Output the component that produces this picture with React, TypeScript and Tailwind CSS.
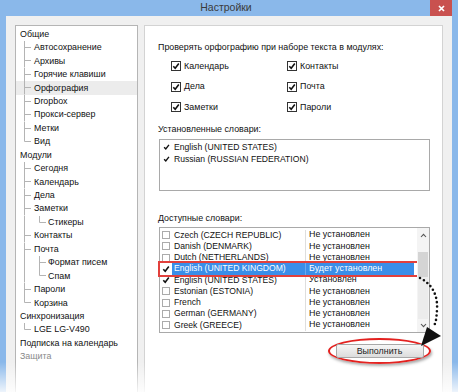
import React from "react";

type TreeNode = { label: string; children?: TreeNode[]; muted?: boolean };

const tree: TreeNode[] = [
  {
    label: "Общие",
    children: [
      { label: "Автосохранение" },
      { label: "Архивы" },
      { label: "Горячие клавиши" },
      { label: "Орфография" },
      { label: "Dropbox" },
      { label: "Прокси-сервер" },
      { label: "Метки" },
      { label: "Вид" },
    ],
  },
  {
    label: "Модули",
    children: [
      { label: "Сегодня" },
      { label: "Календарь" },
      { label: "Дела" },
      { label: "Заметки", children: [{ label: "Стикеры" }] },
      { label: "Контакты" },
      { label: "Почта", children: [{ label: "Формат писем" }, { label: "Спам" }] },
      { label: "Пароли" },
      { label: "Корзина" },
    ],
  },
  { label: "Синхронизация", children: [{ label: "LGE LG-V490" }] },
  { label: "Подписка на календарь" },
  { label: "Защита", muted: true },
];

type FlatRow = { label: string; level: number; last: boolean; guides: boolean[]; muted?: boolean };

function flatten(nodes: TreeNode[], level = 0, guides: boolean[] = []): FlatRow[] {
  const out: FlatRow[] = [];
  nodes.forEach((n, i) => {
    const last = i === nodes.length - 1;
    out.push({ label: n.label, level, last, guides, muted: n.muted });
    if (n.children) out.push(...flatten(n.children, level + 1, level === 0 ? [] : [...guides, !last]));
  });
  return out;
}

const rows = flatten(tree);

const modules = [
  ["Календарь", "Контакты"],
  ["Дела", "Почта"],
  ["Заметки", "Пароли"],
];

const dictionaries = [
  { name: "Czech (CZECH REPUBLIC)", status: "Не установлен", checked: false },
  { name: "Danish (DENMARK)", status: "Не установлен", checked: false },
  { name: "Dutch (NETHERLANDS)", status: "Не установлен", checked: false },
  { name: "English (UNITED KINGDOM)", status: "Будет установлен", checked: true, selected: true },
  { name: "English (UNITED STATES)", status: "Установлен", checked: true },
  { name: "Estonian (ESTONIA)", status: "Не установлен", checked: false },
  { name: "French", status: "Не установлен", checked: false },
  { name: "German (GERMANY)", status: "Не установлен", checked: false },
  { name: "Greek (GREECE)", status: "Не установлен", checked: false },
];

function Check({ size = 8 }: { size?: number }) {
  return (
    <svg width={size} height={size} viewBox="0 0 8 8" className="block">
      <path d="M1.3 4.2 L3.2 6.2 L6.8 1.6" fill="none" stroke="#111" strokeWidth="1.6" />
    </svg>
  );
}

function TreeRow({ row, active }: { row: FlatRow; active: boolean }) {
  const textX = 4 + 14 * row.level;
  const mid = 6.5;
  return (
    <div className={`flex items-center h-[13.45px] ${active ? "bg-[#ececec]" : ""}`}>
      <svg width={textX} height="13.45" className="shrink-0 block">
        {row.guides.map((g, d) =>
          g ? <line key={d} x1={8.5 + 15 * d} y1="0" x2={8.5 + 15 * d} y2="13.45" stroke="#b4b4b4" /> : null,
        )}
        {row.level > 0 && (
          <>
            <line
              x1={8.5 + 15 * (row.level - 1)}
              y1="0"
              x2={8.5 + 15 * (row.level - 1)}
              y2={row.last ? mid : 13.45}
              stroke="#b4b4b4"
            />
            <line
              x1={8.5 + 15 * (row.level - 1)}
              y1={mid}
              x2={15 + 15 * (row.level - 1)}
              y2={mid}
              stroke="#b4b4b4"
            />
          </>
        )}
      </svg>
      <span className={`whitespace-nowrap leading-none ${row.muted ? "text-[#8a8a8a]" : "text-[#111]"}`}>
        {row.label}
      </span>
    </div>
  );
}

function Chevron({ up }: { up?: boolean }) {
  return (
    <svg width="7" height="5" viewBox="0 0 7 5" className="block">
      <path d={up ? "M1 4 L3.5 1.3 L6 4" : "M1 1 L3.5 3.7 L6 1"} fill="none" stroke="#555" strokeWidth="1.1" />
    </svg>
  );
}

export default function App() {
  return (
    <div className="relative w-[458px] h-[392px] overflow-hidden bg-[#8ab8ea] flex flex-col font-['Liberation_Sans',Arial,sans-serif] text-[8.9px] text-[#111]">
      {/* TITLE BAR */}
      <div className="h-[22px] grid grid-cols-[1fr_auto_1fr] pr-[6px]">
        <div />
        <div className="self-center text-[10.5px] text-[#3a3a3a]">Настройки</div>
        <div className="justify-self-end w-[22px] h-[16px] bg-[#c9514f] flex items-center justify-center">
          <svg width="7" height="7" viewBox="0 0 7 7">
            <path d="M1 1 L6 6 M6 1 L1 6" stroke="#fff" strokeWidth="1.7" />
          </svg>
        </div>
      </div>

      {/* CLIENT */}
      <div className="flex-1 mx-[6px] bg-[#f0f0f0] flex gap-[6px] pt-[9px] px-[9px]">
        {/* TREE */}
        <div className="w-[123px] h-[380px] bg-white border border-[#b5b5b5] pt-[1.5px]">
          {rows.map((r, i) => (
            <TreeRow key={i} row={r} active={r.label === "Орфография"} />
          ))}
        </div>

        {/* SETTINGS */}
        <div className="flex-1 h-[380px] bg-white border border-[#d3d3d3] pl-[13px] pt-[15px]">
          <div className="h-[12px] leading-[12px] whitespace-nowrap">
            Проверять орфографию при наборе текста в модулях:
          </div>

          <div className="grid grid-cols-[116px_auto] ml-[13px] mt-[3px]">
            {modules.flat().map(m => (
              <div key={m} className="h-[20.5px] flex items-center gap-[3px]">
                <div className="w-[10px] h-[10px] border border-[#333] bg-white flex items-center justify-center">
                  <Check size={8} />
                </div>
                <span>{m}</span>
              </div>
            ))}
          </div>

          <div className="h-[12px] leading-[12px] mt-[5.5px]">Установленные словари:</div>
          <div className="ml-[1px] mt-[4px] w-[271px] h-[52px] border border-[#a9a9a9] pt-[1px] pl-[3px] text-[8.6px]">
            {["English (UNITED STATES)", "Russian (RUSSIAN FEDERATION)"].map(d => (
              <div key={d} className="h-[12px] flex items-center gap-[4px]">
                <div className="w-[7px] flex justify-center">
                  <Check size={8} />
                </div>
                <span>{d}</span>
              </div>
            ))}
          </div>

          <div className="h-[12px] leading-[12px] mt-[21px]">Доступные словари:</div>
          <div className="ml-[1px] mt-[3px] w-[271px] flex flex-col">
            <div className="h-[106px] border border-[#a9a9a9] flex">
              <div className="flex-1 pt-[1.5px]">
                {dictionaries.map(d => (
                  <div
                    key={d.name}
                    className={`h-[11.25px] flex ${d.selected ? "outline-2 outline-[#e2403c]" : ""}`}
                  >
                    <div className="w-[12px] flex items-center pl-[2px]">
                      <div
                        className={`w-[8px] h-[8px] flex items-center justify-center ${d.checked ? "" : "border border-[#ababab]"}`}
                      >
                        {d.checked && <Check size={8} />}
                      </div>
                    </div>
                    <div className={`flex-1 flex mr-[3px] ${d.selected ? "bg-[#3a8ee8] text-white" : ""}`}>
                      <div className="w-[133px] pl-[2px] flex items-center whitespace-nowrap text-[8.6px]">
                        {d.name}
                      </div>
                      <div
                        className={`flex-1 pl-[3px] flex items-center whitespace-nowrap border-l ${d.selected ? "border-[#6aa9ee]" : "border-[#dedede]"}`}
                      >
                        {d.status}
                      </div>
                    </div>
                  </div>
                ))}
              </div>
              {/* SCROLLBAR */}
              <div className="w-[12px] bg-[#f4f4f4] flex flex-col">
                <div className="h-[14px] flex items-center justify-center">
                  <Chevron up />
                </div>
                <div className="flex-1 flex flex-col">
                  <div className="h-[10px]" />
                  <div className="h-[25px] mx-[1px] bg-[#d4d4d4]" />
                  <div className="flex-1 bg-[#ececec] mx-[1px]" />
                </div>
                <div className="h-[13px] flex items-center justify-center">
                  <Chevron />
                </div>
              </div>
            </div>

            <div className="self-end -mr-[1px] mt-[5px] w-[103px] h-[26px] rounded-[50%] border-2 border-[#e3211f] shadow-[1px_2px_3px_rgba(0,0,0,0.35)] flex items-center justify-center">
              <button className="w-[88px] h-[14px] rounded-[2px] border border-[#a8a8a8] bg-linear-to-b from-[#f6f6f6] to-[#dcdcdc] text-[8.9px] text-[#222] leading-none">
                Выполнить
              </button>
            </div>
          </div>
        </div>
      </div>

      {/* DOTTED ARROW */}
      <svg className="absolute left-[400px] top-[265px]" width="58" height="90" viewBox="0 0 58 90">
        <path
          d="M20 13 C32 19, 38 30, 37 45 S35 57, 34 62"
          fill="none"
          stroke="#111"
          strokeWidth="2.6"
          strokeLinecap="round"
          strokeDasharray="0 4.4"
        />
        <polygon points="21,81 27,62 41,71" fill="#111" />
      </svg>

      {/* BOTTOM FADE */}
      <div className="absolute left-0 right-0 bottom-0 h-[30px] bg-linear-to-b from-transparent to-white/85" />
    </div>
  );
}
